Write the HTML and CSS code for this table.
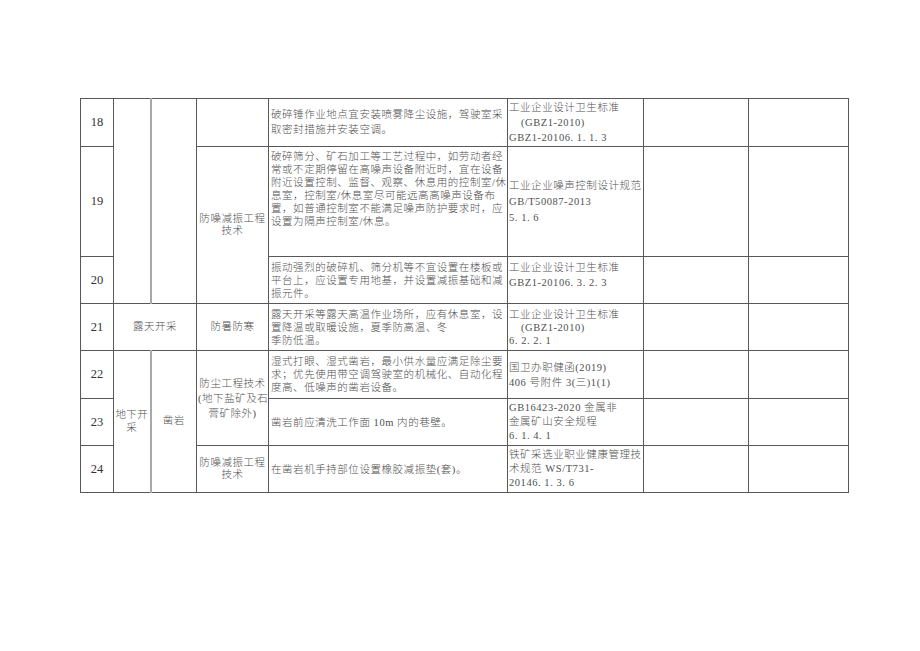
FILE: index.html
```html
<!DOCTYPE html>
<html lang="zh-CN">
<head>
<meta charset="utf-8">
<title>表</title>
<link rel="stylesheet" href="styles.css">
</head>
<body>
<div class="sheet">
<table class="grid">
  <colgroup>
    <col class="c-a"><col class="c-b"><col class="c-c"><col class="c-d"><col class="c-e"><col class="c-f"><col class="c-g"><col class="c-h">
  </colgroup>
  <tbody>
    <tr class="r18">
      <td class="num">18</td>
      <td rowspan="3" class="soft-r"></td>
      <td rowspan="3"></td>
      <td></td>
      <td class="txt lh14">破碎锤作业地点宜安装喷雾降尘设施，驾驶室采<br>取密封措施并安装空调。</td>
      <td class="ref lh15">工业企业设计卫生标准<br><span class="ind">(GBZ1-2010)</span><br>GBZ1-20106. 1. 1. 3</td>
      <td></td>
      <td></td>
    </tr>
    <tr class="r19">
      <td class="num">19</td>
      <td rowspan="2" class="cat">防噪减振工程<br>技术</td>
      <td class="txt top">破碎筛分、矿石加工等工艺过程中，如劳动者经<br>常或不定期停留在高噪声设备附近时，宜在设备<br>附近设置控制、监督、观察、休息用的控制室/休<br>息室，控制室/休息室尽可能远高高噪声设备布<br>置，如普通控制室不能满足噪声防护要求时，应<br>设置为隔声控制室/休息。</td>
      <td class="ref lh16">工业企业噪声控制设计规范<br>GB/T50087-2013<br>5. 1. 6</td>
      <td></td>
      <td></td>
    </tr>
    <tr class="r20">
      <td class="num">20</td>
      <td class="txt">振动强烈的破碎机、筛分机等不宜设置在楼板或<br>平台上，应设置专用地基，并设置减振基础和减<br>振元件。</td>
      <td class="ref lh15 top">工业企业设计卫生标准<br>GBZ1-20106. 3. 2. 3</td>
      <td></td>
      <td></td>
    </tr>
    <tr class="r21">
      <td class="num">21</td>
      <td colspan="2" class="cat">露天开采</td>
      <td class="cat">防暑防寒</td>
      <td class="txt">露天开采等露天高温作业场所，应有休息室，设<br>置降温或取暖设施，夏季防高温、冬<br>季防低温。</td>
      <td class="ref">工业企业设计卫生标准<br><span class="ind">(GBZ1-2010)</span><br>6. 2. 2. 1</td>
      <td></td>
      <td></td>
    </tr>
    <tr class="r22">
      <td class="num">22</td>
      <td rowspan="3" class="cat narrow">地下开<br>采</td>
      <td rowspan="3" class="cat soft-l">凿岩</td>
      <td rowspan="2" class="cat lh15">防尘工程技术<br>(地下盐矿及石<br>膏矿除外)</td>
      <td class="txt">湿式打眼、湿式凿岩，最小供水量应满足除尘要<br>求；优先使用带空调驾驶室的机械化、自动化程<br>度高、低噪声的凿岩设备。</td>
      <td class="ref lh15">国卫办职健函(2019)<br>406 号附件 3(三)1(1)</td>
      <td></td>
      <td></td>
    </tr>
    <tr class="r23">
      <td class="num">23</td>
      <td class="txt">凿岩前应清洗工作面 10m 内的巷壁。</td>
      <td class="ref lh14">GB16423-2020 金属非<br>金属矿山安全规程<br>6. 1. 4. 1</td>
      <td></td>
      <td></td>
    </tr>
    <tr class="r24">
      <td class="num">24</td>
      <td class="cat">防噪减振工程<br>技术</td>
      <td class="txt">在凿岩机手持部位设置橡胶减振垫(套)。</td>
      <td class="ref lh14">铁矿采选业职业健康管理技<br>术规范 WS/T731-<br>20146. 1. 3. 6</td>
      <td></td>
      <td></td>
    </tr>
  </tbody>
</table>
</div>
</body>
</html>
```
FILE: styles.css
```css
html, body {
  margin: 0;
  padding: 0;
  background: #ffffff;
}

.sheet {
  padding: 98px 0 0 80px;
}

.grid {
  border-collapse: collapse;
  table-layout: fixed;
  width: 768px;
  font-family: "Liberation Serif", "Noto Sans CJK SC", serif;
  font-size: 10.5px;
  font-weight: 300;
  color: #505050;
  letter-spacing: 0.55px;
}

.c-a { width: 33px; }
.c-b { width: 37px; }
.c-c { width: 46px; }
.c-d { width: 72px; }
.c-e { width: 239px; }
.c-f { width: 136px; }
.c-g { width: 105px; }
.c-h { width: 100px; }

.grid td {
  border: 1px solid #585858;
  padding: 0 1px;
  vertical-align: middle;
  white-space: nowrap;
  line-height: 13px;
  overflow: hidden;
}

.r18 { height: 48px; }
.r19 { height: 110px; }
.r20 { height: 47px; }
.r21 { height: 47px; }
.r22 { height: 48px; }
.r23 { height: 47px; }
.r24 { height: 47px; }

.grid td.num {
  text-align: center;
  font-size: 12.5px;
  font-weight: 400;
  letter-spacing: 0;
  color: #333;
}

.grid td.cat {
  text-align: center;
  line-height: 12.5px;
}

.grid td.narrow {
  padding: 0;
  letter-spacing: 0.3px;
}

.grid td.soft-r {
  border-right: 2px solid #a8a8a8;
}

.grid td.soft-l {
  border-left: 2px solid #a8a8a8;
}

.grid td.txt {
  text-align: left;
  padding-left: 2px;
}

.grid td.ref {
  text-align: left;
  padding-left: 1px;
}

.grid td.top {
  vertical-align: top;
  padding-top: 3px;
}

.grid td.lh14 { line-height: 14.3px; }
.grid td.lh15 { line-height: 15px; }
.grid td.lh16 { line-height: 16px; }

.ind {
  padding-left: 12px;
}
```
